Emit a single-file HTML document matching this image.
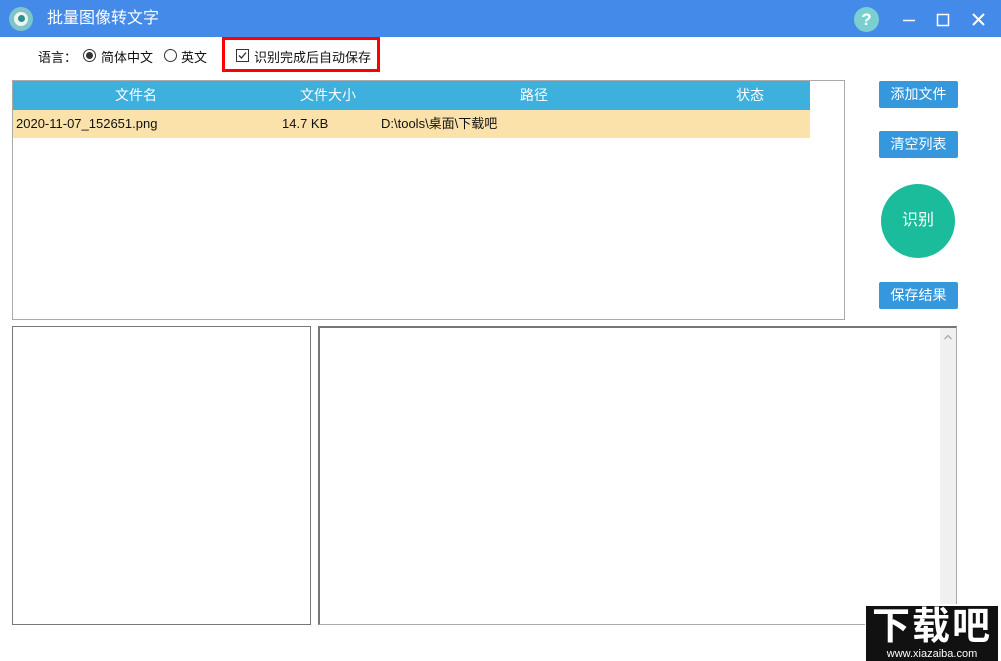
<!DOCTYPE html>
<html><head><meta charset="utf-8"><style>
*{margin:0;padding:0;box-sizing:border-box}
body{width:1001px;height:661px;background:#fff;position:relative;overflow:hidden;font-family:"Liberation Sans","Noto Sans CJK SC",sans-serif;font-size:13px;color:#111}
.a{position:absolute}
.btn{position:absolute;left:879px;width:79px;height:27px;background:#3598dc;color:#fff;font-size:14px;text-align:center;line-height:27px;border-radius:2px}
</style></head><body>
<div class="a" style="left:0;top:0;width:1001px;height:37px;background:#438ae9"></div>
<div class="a" style="left:9px;top:7px;width:24px;height:24px;border-radius:50%;background:#7fc4c8"></div>
<div class="a" style="left:14px;top:12px;width:14px;height:14px;border-radius:50%;background:#eef4f2"></div>
<div class="a" style="left:18px;top:15px;width:7px;height:7px;border-radius:50%;background:#2f8f8a"></div>
<div class="a" style="left:47px;top:8px;color:#fff;font-size:16px;line-height:22px">批量图像转文字</div>
<div class="a" style="left:854px;top:7px;width:25px;height:25px;border-radius:50%;background:#7ccfd1;color:#fff;font-weight:bold;text-align:center;line-height:25px;font-size:17px">?</div>
<svg class="a" style="left:900px;top:10px" width="90" height="20"><line x1="3" y1="10.5" x2="15" y2="10.5" stroke="#fff" stroke-width="1.5"/><rect x="37.5" y="4.5" width="11" height="11" fill="none" stroke="#fff" stroke-width="1.5"/><path d="M73 4L84 15M84 4L73 15" stroke="#fff" stroke-width="2"/></svg>
<div class="a" style="left:38px;top:47px;font-size:13px">语言：</div>
<div class="a" style="left:83px;top:49px;width:13px;height:13px;border:1px solid #333;border-radius:50%"></div>
<div class="a" style="left:86px;top:52px;width:7px;height:7px;background:#333;border-radius:50%"></div>
<div class="a" style="left:101px;top:47px">简体中文</div>
<div class="a" style="left:164px;top:49px;width:13px;height:13px;border:1px solid #333;border-radius:50%"></div>
<div class="a" style="left:181px;top:47px">英文</div>
<div class="a" style="left:222px;top:37px;width:158px;height:35px;border:3px solid #f00"></div>
<div class="a" style="left:236px;top:49px;width:13px;height:13px;border:1px solid #333"></div>
<svg class="a" style="left:236px;top:49px" width="13" height="13"><path d="M3 6.5L5.5 9L10 3.5" fill="none" stroke="#333" stroke-width="1.3"/></svg>
<div class="a" style="left:254px;top:47px">识别完成后自动保存</div>
<div class="a" style="left:12px;top:80px;width:833px;height:240px;border:1px solid #aaa"></div>
<div class="a" style="left:13px;top:81px;width:797px;height:29px;background:#3eb0de;color:#fff;font-size:14px;line-height:29px">
<span class="a" style="left:102px">文件名</span><span class="a" style="left:287px">文件大小</span><span class="a" style="left:507px">路径</span><span class="a" style="left:723px">状态</span></div>
<div class="a" style="left:13px;top:110px;width:797px;height:28px;background:#fbe1aa;line-height:28px">
<span class="a" style="left:3px">2020-11-07_152651.png</span><span class="a" style="left:269px">14.7 KB</span><span class="a" style="left:368px">D:\tools\桌面\下载吧</span></div>
<div class="btn" style="top:81px">添加文件</div>
<div class="btn" style="top:131px">清空列表</div>
<div class="a" style="left:881px;top:184px;width:74px;height:74px;border-radius:50%;background:#1abc9c;color:#fff;font-size:16px;text-align:center;line-height:74px">识别</div>
<div class="btn" style="top:282px">保存结果</div>
<div class="a" style="left:12px;top:326px;width:299px;height:299px;border:1px solid #777"></div>
<div class="a" style="left:318px;top:326px;width:639px;height:299px;border:1px solid #aaa;border-top:2px solid #777;border-left:2px solid #777"></div>
<div class="a" style="left:940px;top:328px;width:16px;height:296px;background:#f0f0f0"></div>
<svg class="a" style="left:940px;top:330px" width="16" height="14"><path d="M4.5 9L8 5.5L11.5 9" fill="none" stroke="#aaa" stroke-width="1.3"/></svg>
<div class="a" style="left:865px;top:604px;width:136px;height:57px;background:#fff"></div>
<div class="a" style="left:866px;top:606px;width:132px;height:42px;background:#111;color:#fff;font-size:38px;line-height:42px;font-weight:bold;text-align:center;letter-spacing:2px">下载吧</div>
<div class="a" style="left:866px;top:648px;width:132px;height:13px;background:#111;color:#fff;font-size:11px;line-height:13px;text-align:center">www.xiazaiba.com</div>
</body></html>
